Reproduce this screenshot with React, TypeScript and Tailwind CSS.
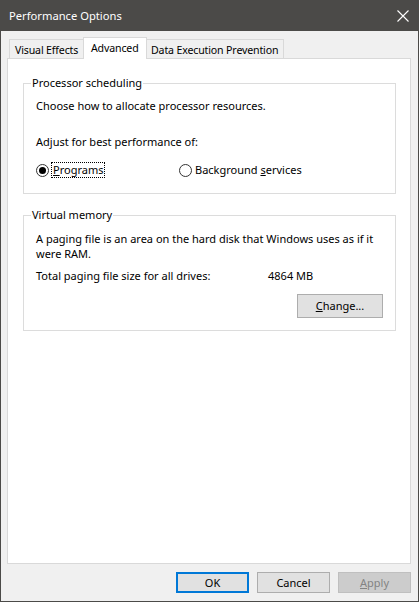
import React from "react";

const font = { fontFamily: '"Noto Sans", "Open Sans", sans-serif' };

function Radio({ checked }: { checked?: boolean }) {
  return (
    <span className="w-[13px] h-[13px] rounded-full border border-[#333] bg-white flex items-center justify-center shrink-0">
      {checked && <span className="w-[7px] h-[7px] rounded-full bg-[#000]" />}
    </span>
  );
}

function Button({
  children,
  primary,
  disabled,
  className = "",
}: {
  children: React.ReactNode;
  primary?: boolean;
  disabled?: boolean;
  className?: string;
}) {
  let tone = "bg-[#e1e1e1] border border-[#adadad] text-black";
  if (primary) tone = "bg-[#e1e1e1] border-2 border-[#0078d7] text-black";
  if (disabled) tone = "bg-[#cccccc] border border-[#bfbfbf] text-[#838383]";
  return (
    <div className={`flex items-center justify-center ${tone} ${className}`}>
      {children}
    </div>
  );
}

export default function App() {
  return (
    <div
      className="w-[419px] h-[602px] bg-[#4b4a48] flex flex-col text-[11px] leading-[16px] text-black whitespace-nowrap"
      style={font}
    >
      {/* title bar */}
      <div className="h-[31px] flex items-center justify-between pl-[9px] pr-[10px] text-white text-[11.2px]">
        <span>Performance Options</span>
        <svg width="12" height="12" viewBox="0 0 12 12" className="mt-[1px]">
          <path d="M0.5 0.5 L11.5 11.5 M11.5 0.5 L0.5 11.5" stroke="#fff" strokeWidth="1.1" />
        </svg>
      </div>

      <div className="flex-1 mx-[1px] mb-[1px] bg-[#f0f0f0] flex flex-col px-[6px] pr-[7px]">
        {/* tabs */}
        <div className="mt-[6px] h-[21px] flex items-end pl-[2px] text-[10.6px] tracking-[-0.15px]">
          <div className="w-[75px] h-[19px] border border-b-0 border-[#d9d9d9] bg-[#f0f0f0] flex items-center pl-[5px] pt-[1px]">
            Visual Effects
          </div>
          <div className="relative z-10 -ml-[1px] -mb-[1px] w-[64px] h-[22px] border border-b-0 border-[#d9d9d9] bg-white flex items-center pl-[7px] pb-[1px]">
            Advanced
          </div>
          <div className="-ml-[1px] w-[138px] h-[19px] border border-b-0 border-[#d9d9d9] bg-[#f0f0f0] flex items-center pl-[4px] pt-[1px]">
            Data Execution Prevention
          </div>
        </div>

        {/* panel */}
        <div className="h-[506px] bg-white border border-[#d9d9d9] flex flex-col">
          <fieldset className="mt-[16px] ml-[15px] mr-[14px] border border-[#dcdcdc] pl-[12px] pr-[12px] pb-[15px]">
            <legend className="-ml-[5px] px-[1px]">Processor scheduling</legend>
            <div className="mt-[7px]">Choose how to allocate processor resources.</div>
            <div className="mt-[20px]">Adjust for best performance of:</div>
            <div className="mt-[12px] flex items-center">
              <div className="flex items-center w-[143px]">
                <Radio checked />
                <span className="ml-[2px] border border-dotted border-black px-[1px] leading-[14px]">
                  <span className="underline">P</span>rograms
                </span>
              </div>
              <div className="flex items-center">
                <Radio />
                <span className="ml-[3px]">
                  Background <span className="underline">s</span>ervices
                </span>
              </div>
            </div>
          </fieldset>

          <fieldset className="mt-[13px] ml-[15px] mr-[14px] border border-[#dcdcdc] pl-[12px] pr-[12px] pb-[12px]">
            <legend className="-ml-[5px] px-[1px]">Virtual memory</legend>
            <div className="mt-[8px] leading-[15px]">
              A paging file is an area on the hard disk that Windows uses as if it
              <br />
              were RAM.
            </div>
            <div className="mt-[7px] flex">
              <span className="w-[232px]">Total paging file size for all drives:</span>
              <span>4864 MB</span>
            </div>
            <div className="mt-[10px] flex justify-end">
              <Button className="w-[86px] h-[24px]">
                <span>
                  <span className="underline">C</span>hange...
                </span>
              </Button>
            </div>
          </fieldset>
        </div>

        {/* footer buttons */}
        <div className="mt-[8px] flex justify-end gap-[8px]">
          <Button primary className="w-[73px] h-[21px]">OK</Button>
          <Button className="w-[73px] h-[21px]">Cancel</Button>
          <Button disabled className="w-[73px] h-[21px]">
            <span>
              <span className="underline">A</span>pply
            </span>
          </Button>
        </div>
      </div>
    </div>
  );
}
